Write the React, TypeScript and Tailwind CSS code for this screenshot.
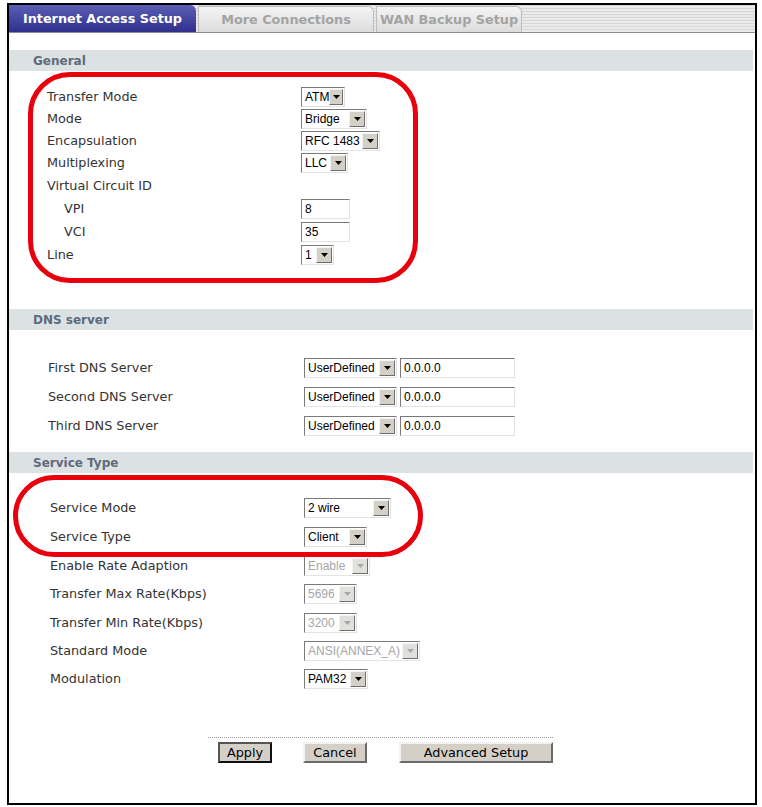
import React from "react";

const verdana = "font-['DejaVu_Sans',Verdana,sans-serif]";
const arial = "font-['Liberation_Sans',Arial,sans-serif]";

function Arrow({ disabled }: { disabled?: boolean }) {
  return (
    <span
      className={
        "flex h-[16px] w-[16px] items-center justify-center border border-t-[#f4f4f4] border-l-[#f4f4f4] border-b-[#6f6f6f] border-r-[#6f6f6f] " +
        (disabled ? "bg-[#e2e0dc]" : "bg-[#d4d0c8]")
      }
    >
      <svg width="7" height="4" viewBox="0 0 7 4">
        <path d="M0 0h7L3.5 4z" fill={disabled ? "#a8a8a8" : "#000"} />
      </svg>
    </span>
  );
}

function Select({ value, w, disabled }: { value: string; w: number; disabled?: boolean }) {
  return (
    <div
      style={{ width: w }}
      className={
        "flex h-[20px] items-center justify-between border border-t-[#7a7a7a] border-l-[#7a7a7a] border-b-[#e3e3e3] border-r-[#e3e3e3] bg-white pl-[3px] pr-[1px] text-[12px] " +
        arial +
        (disabled ? " text-[#a6a6a6]" : " text-black")
      }
    >
      <span className="whitespace-nowrap leading-none">{value}</span>
      <Arrow disabled={disabled} />
    </div>
  );
}

function TextBox({ value, w }: { value: string; w: number }) {
  return (
    <div
      style={{ width: w }}
      className={
        "flex h-[20px] items-center border border-t-[#7a7a7a] border-l-[#7a7a7a] border-b-[#e3e3e3] border-r-[#e3e3e3] bg-white pl-[3px] text-[12px] text-black " +
        arial
      }
    >
      {value}
    </div>
  );
}

function Header({ title }: { title: string }) {
  return (
    <div className={"mr-[2px] flex h-[21px] items-center bg-[#dce2e4] pl-[24px] text-[12px] font-bold text-[#5d6b7b] " + verdana}>
      {title}
    </div>
  );
}

function Row({
  label,
  h,
  indent,
  labelW,
  pad,
  children,
}: {
  label: string;
  h: number;
  indent?: boolean;
  labelW: number;
  pad: number;
  children?: React.ReactNode;
}) {
  return (
    <div style={{ height: h, paddingLeft: pad }} className="flex items-center">
      <div
        style={{ width: labelW }}
        className={"shrink-0 text-[12.8px] text-[#333] " + verdana + (indent ? " pl-[17px]" : "")}
      >
        {label}
      </div>
      <div className="flex items-center gap-[3px]">{children}</div>
    </div>
  );
}

function Button({ label, w, primary }: { label: string; w: number; primary?: boolean }) {
  return (
    <div
      style={{ width: w }}
      className={
        "flex h-[21px] items-center justify-center bg-[#d4d0c8] text-[12.8px] text-black " +
        verdana +
        (primary
          ? " border-2 border-t-[#555] border-l-[#555] border-b-[#111] border-r-[#111]"
          : " border-2 border-t-[#f2f2f2] border-l-[#f2f2f2] border-b-[#6a6a6a] border-r-[#6a6a6a]")
      }
    >
      {label}
    </div>
  );
}

export default function App() {
  return (
    <div className="h-[807px] w-[762px] bg-white pl-[7px] pt-[3px]">
      <div className="flex h-[802px] w-[750px] flex-col border-2 border-black bg-white">
        {/* tabs */}
        <div className="flex h-[28px] items-end border-b border-[#8c8c8c] bg-[repeating-linear-gradient(180deg,#d6d6d6_0px,#d6d6d6_1px,#ebebeb_1px,#ebebeb_3px)]">
          <div className={"flex h-[27px] w-[187px] items-center justify-center rounded-tr-[6px] bg-linear-to-b from-[#5d5db4] to-[#30308c] text-[12.8px] font-bold text-white " + verdana}>
            Internet Access Setup
          </div>
          <div className={"ml-[2px] flex h-[26px] w-[176px] items-center justify-center rounded-tr-[6px] border border-b-0 border-[#bdbdbd] bg-linear-to-b from-[#f4f4f4] to-[#dcdcdc] text-[12.8px] font-bold text-[#a3a3a3] " + verdana}>
            More Connections
          </div>
          <div className={"ml-[2px] flex h-[26px] w-[146px] items-center justify-center rounded-tr-[6px] border border-b-0 border-[#bdbdbd] bg-linear-to-b from-[#f4f4f4] to-[#dcdcdc] text-[12.8px] font-bold text-[#a3a3a3] " + verdana}>
            WAN Backup Setup
          </div>
        </div>

        {/* General */}
        <div className="relative mt-[17px]">
          <Header title="General" />
          <div className="pt-[15px]">
            <Row label="Transfer Mode" h={22} labelW={254} pad={38}>
              <Select value="ATM" w={44} />
            </Row>
            <Row label="Mode" h={22} labelW={254} pad={38}>
              <Select value="Bridge" w={66} />
            </Row>
            <Row label="Encapsulation" h={22} labelW={254} pad={38}>
              <Select value="RFC 1483" w={79} />
            </Row>
            <Row label="Multiplexing" h={22} labelW={254} pad={38}>
              <Select value="LLC" w={47} />
            </Row>
            <Row label="Virtual Circuit ID" h={23} labelW={254} pad={38} />
            <Row label="VPI" h={23} labelW={254} pad={38} indent>
              <TextBox value="8" w={49} />
            </Row>
            <Row label="VCI" h={23} labelW={254} pad={38} indent>
              <TextBox value="35" w={49} />
            </Row>
            <Row label="Line" h={23} labelW={254} pad={38}>
              <Select value="1" w={33} />
            </Row>
          </div>
          <div className="pointer-events-none absolute left-[19px] top-[22px] h-[211px] w-[390px] rounded-[42px] border-[5px] border-[#e8000c]" />
        </div>

        {/* DNS */}
        <div className="mt-[43px]">
          <Header title="DNS server" />
          <div className="pt-[23px]">
            <Row label="First DNS Server" h={29} labelW={256} pad={39}>
              <Select value="UserDefined" w={93} />
              <TextBox value="0.0.0.0" w={115} />
            </Row>
            <Row label="Second DNS Server" h={29} labelW={256} pad={39}>
              <Select value="UserDefined" w={93} />
              <TextBox value="0.0.0.0" w={115} />
            </Row>
            <Row label="Third DNS Server" h={29} labelW={256} pad={39}>
              <Select value="UserDefined" w={93} />
              <TextBox value="0.0.0.0" w={115} />
            </Row>
          </div>
        </div>

        {/* Service Type */}
        <div className="relative mt-[12px]">
          <Header title="Service Type" />
          <div className="pt-[21px]">
            <Row label="Service Mode" h={28} labelW={254} pad={41}>
              <Select value="2 wire" w={87} />
            </Row>
            <Row label="Service Type" h={29} labelW={254} pad={41}>
              <Select value="Client" w={63} />
            </Row>
            <Row label="Enable Rate Adaption" h={29} labelW={254} pad={41}>
              <Select value="Enable" w={66} disabled />
            </Row>
            <Row label="Transfer Max Rate(Kbps)" h={28} labelW={254} pad={41}>
              <Select value="5696" w={53} disabled />
            </Row>
            <Row label="Transfer Min Rate(Kbps)" h={29} labelW={254} pad={41}>
              <Select value="3200" w={53} disabled />
            </Row>
            <Row label="Standard Mode" h={28} labelW={254} pad={41}>
              <Select value="ANSI(ANNEX_A)" w={116} disabled />
            </Row>
            <Row label="Modulation" h={28} labelW={254} pad={41}>
              <Select value="PAM32" w={64} />
            </Row>
          </div>
          <div className="pointer-events-none absolute left-[4px] top-[23px] h-[82px] w-[410px] rounded-full border-[5px] border-[#e8000c]" />
        </div>

        {/* buttons */}
        <div className="mt-[44px] ml-[199px] w-[345px] border-t border-dotted border-[#9a9a9a] pt-[4px]">
          <div className="flex items-center">
            <div className="ml-[10px]">
              <Button label="Apply" w={54} primary />
            </div>
            <div className="ml-[31px]">
              <Button label="Cancel" w={64} />
            </div>
            <div className="ml-[32px]">
              <Button label="Advanced Setup" w={154} />
            </div>
          </div>
        </div>
      </div>
    </div>
  );
}
